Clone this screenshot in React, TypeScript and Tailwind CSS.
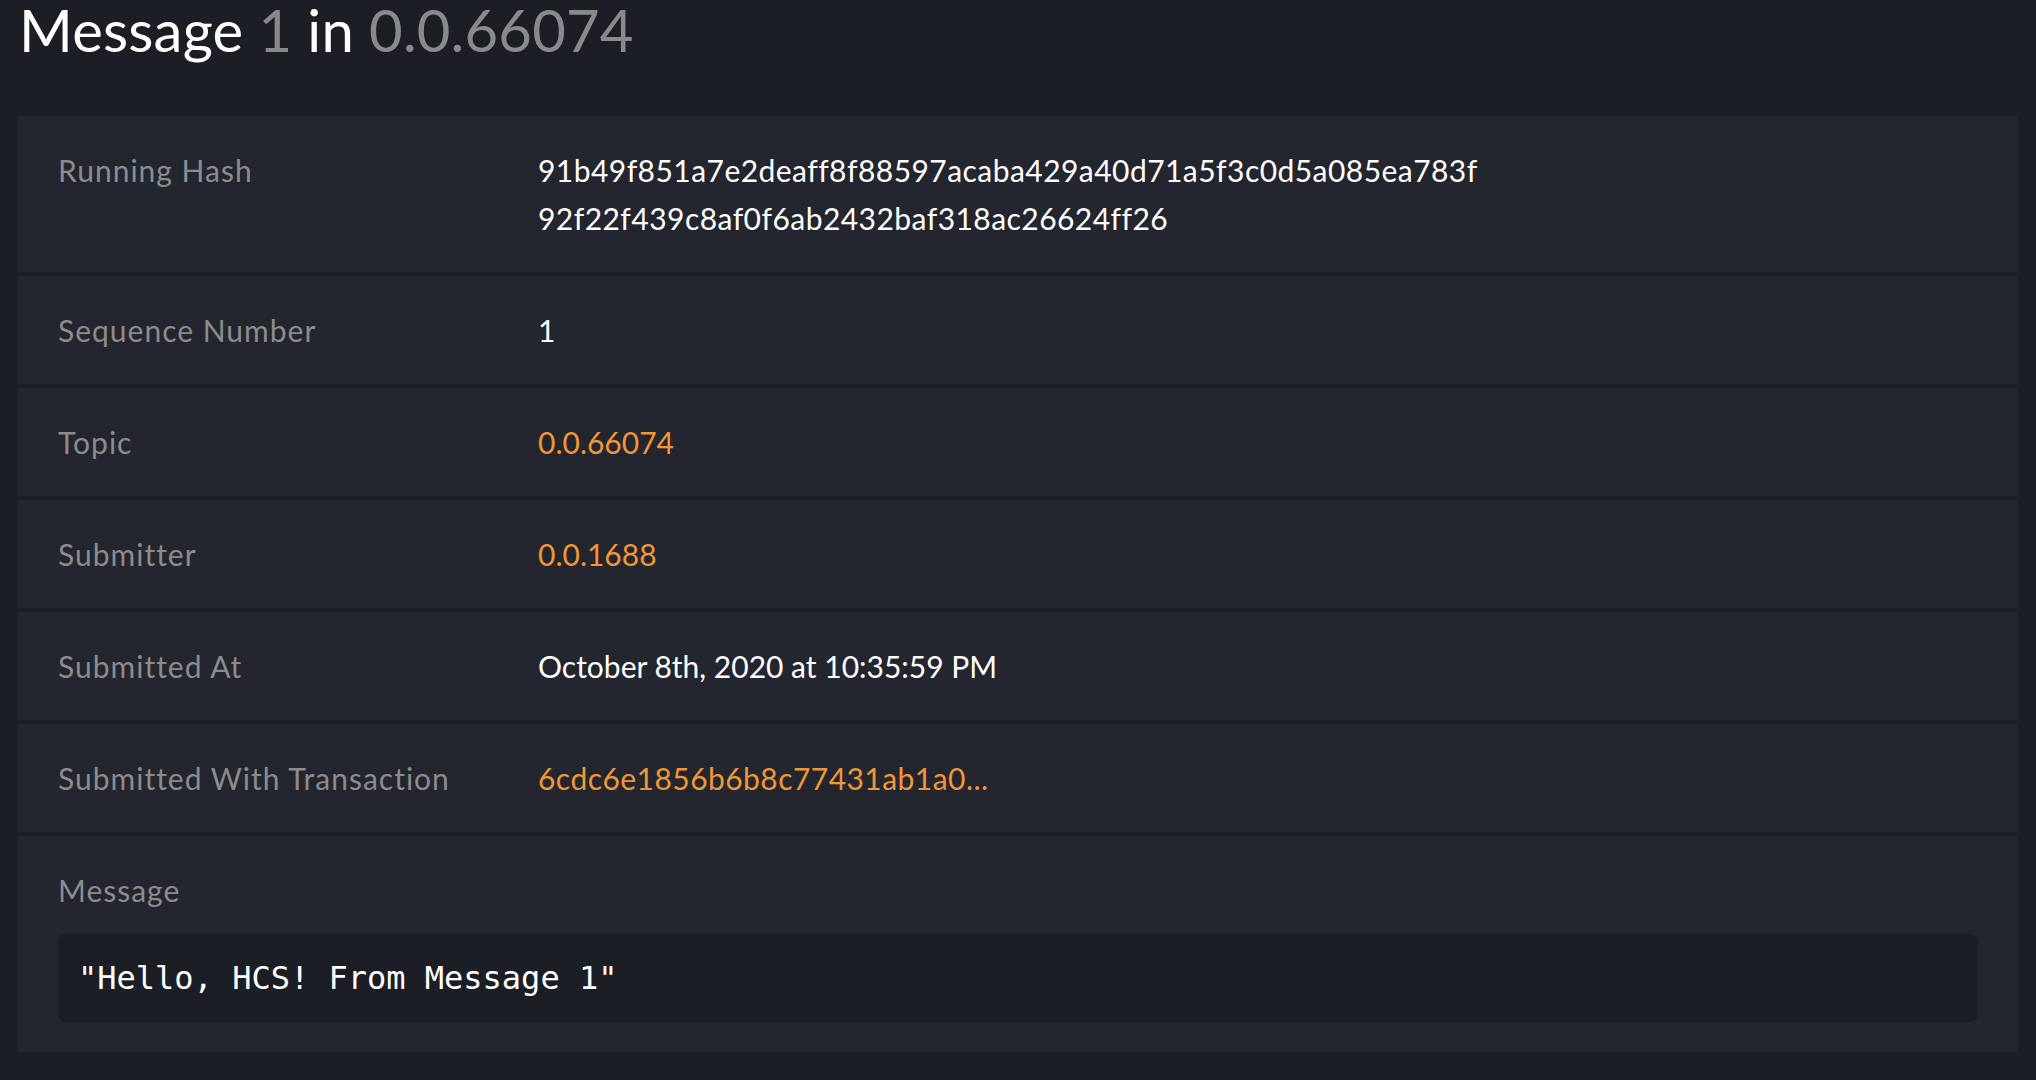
import React from "react";

type Row = {
  label: string;
  value: React.ReactNode;
  link?: boolean;
  wide?: boolean;
};

const rows: Row[] = [
  {
    label: "Running Hash",
    wide: true,
    value: (
      <>
        91b49f851a7e2deaff8f88597acaba429a40d71a5f3c0d5a085ea783f
        <br />
        92f22f439c8af0f6ab2432baf318ac26624ff26
      </>
    ),
  },
  { label: "Sequence Number", value: "1" },
  { label: "Topic", value: "0.0.66074", link: true },
  { label: "Submitter", value: "0.0.1688", link: true },
  { label: "Submitted At", value: "October 8th, 2020 at 10:35:59 PM" },
  { label: "Submitted With Transaction", value: "6cdc6e1856b6b8c77431ab1a0...", link: true, wide: true },
];

export default function App() {
  return (
    <div
      className="min-h-[1080px] w-full bg-[#1b1e25] px-[18px] pt-[1px] text-white"
      style={{ fontFamily: "Lato, 'Open Sans', sans-serif" }}
    >
      {/* Heading */}
      <h1 className="text-[58px] leading-none font-normal pl-[1px] tracking-[0.2px]">
        Message <span className="text-[#8a8a8a]">1</span> in{" "}
        <span className="text-[#8a8a8a]">0.0.66074</span>
      </h1>

      <div className="mt-[57px] flex flex-col gap-[4px]">
        {rows.map((row) => (
          <div
            key={row.label}
            className="grid grid-cols-4 bg-[#23262e] px-[40px] py-[30px] text-[30px] leading-[48px]"
          >
            <div className="text-[#8c8c8c] tracking-[1px]">{row.label}</div>
            <div
              className={`col-span-3 ${row.link ? "text-[#ef9636]" : "text-white"} ${
                row.wide ? "tracking-[0.45px]" : ""
              }`}
            >
              {row.value}
            </div>
          </div>
        ))}

        {/* Message body */}
        <div className="bg-[#23262e] px-[40px] pt-[30px] pb-[30px]">
          <div className="text-[30px] leading-[48px] text-[#8c8c8c] tracking-[1px]">Message</div>
          <div className="mt-[20px] rounded-[8px] bg-[#1b1e25] p-[20px]">
            <pre
              className="text-[32px] leading-[48px] text-white"
              style={{ fontFamily: "'DejaVu Sans Mono', 'Liberation Mono', monospace" }}
            >
              "Hello, HCS! From Message 1"
            </pre>
          </div>
        </div>
      </div>
    </div>
  );
}
